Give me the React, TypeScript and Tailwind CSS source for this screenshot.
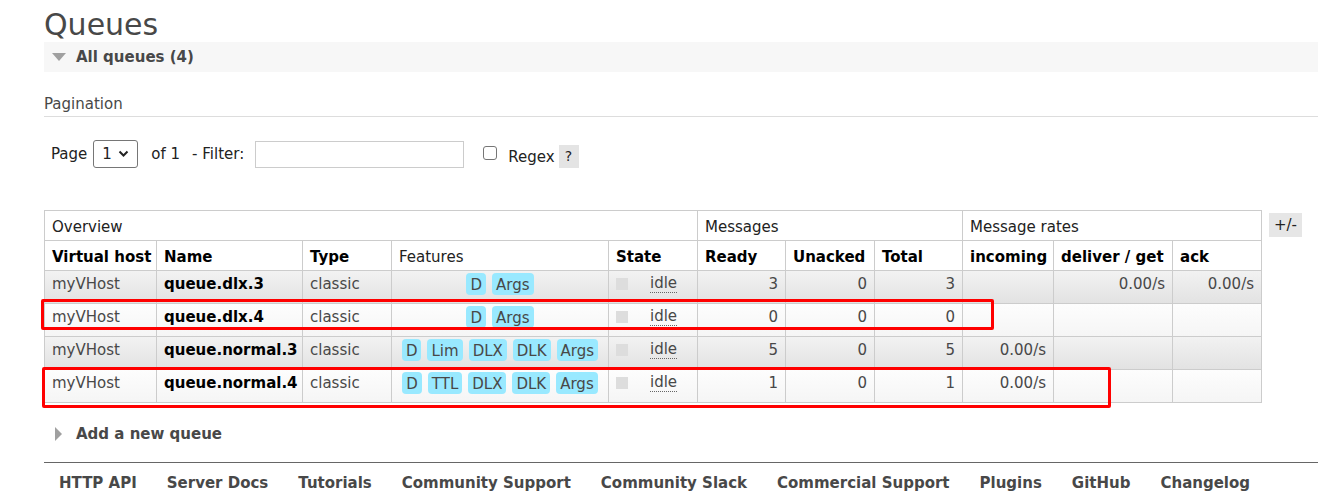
import React from "react";

const F = { fontFamily: '"DejaVu Sans", Verdana, Tahoma, sans-serif' };

type Row = {
  name: string;
  feats: string[];
  ready: string;
  unacked: string;
  total: string;
  incoming: string;
  deliver: string;
  ack: string;
  alt: boolean;
};

const rows: Row[] = [
  { name: "queue.dlx.3", feats: ["D", "Args"], ready: "3", unacked: "0", total: "3", incoming: "", deliver: "0.00/s", ack: "0.00/s", alt: true },
  { name: "queue.dlx.4", feats: ["D", "Args"], ready: "0", unacked: "0", total: "0", incoming: "", deliver: "", ack: "", alt: false },
  { name: "queue.normal.3", feats: ["D", "Lim", "DLX", "DLK", "Args"], ready: "5", unacked: "0", total: "5", incoming: "0.00/s", deliver: "", ack: "", alt: true },
  { name: "queue.normal.4", feats: ["D", "TTL", "DLX", "DLK", "Args"], ready: "1", unacked: "0", total: "1", incoming: "0.00/s", deliver: "", ack: "", alt: false },
];

const colW = [112, 146, 89, 217, 89, 88, 89, 88, 91, 119, 89];

export default function App() {
  const td = "border border-[#cccccc] px-[7px] align-top pt-[2px] text-[15px]";
  const th = "border border-[#cccccc] px-[7px] text-left pt-[3px]";
  return (
    <div style={F} className="w-[1318px] h-[504px] bg-white text-[#484848] overflow-hidden relative">
      <div className="pl-[44px]">
        <h1 className="text-[30px] leading-[34px] pt-[8px] text-[#484848] font-normal">Queues</h1>
        <div className="h-[30px] bg-[#f7f7f7] flex items-center">
          <svg width="14" height="8" viewBox="0 0 14 8" className="ml-[8px] mr-[10px]">
            <polygon points="0,0 14,0 7,8" fill="#a0a0a0" />
          </svg>
          <span className="font-bold text-[15px] text-[#484848]">All queues (4)</span>
        </div>
        <div className="mt-[24px] border-b border-[#dddddd] pb-[3px] text-[15px] leading-[17px] text-[#484848]">Pagination</div>
        <div className="flex items-center mt-[23px] h-[28px] text-[15px] text-[#222]">
          <span className="ml-[7px]">Page</span>
          <div className="ml-[6px] w-[45px] h-[28px] border border-[#767676] rounded-[3px] flex items-center justify-between px-[8px]">
            <span>1</span>
            <svg width="11" height="8" viewBox="0 0 11 8"><polyline points="1.5,1.5 5.5,5.5 9.5,1.5" fill="none" stroke="#222" strokeWidth="2" /></svg>
          </div>
          <span className="ml-[13px]">of 1</span>
          <span className="ml-[12px]">- Filter:</span>
          <div className="ml-[11px] w-[209px] h-[27px] border border-[#cccccc] bg-white" />
          <div className="ml-[19px] w-[14px] h-[14px] border border-[#767676] rounded-[3px] mb-[3px]" />
          <span className="ml-[11px] mt-[6px]">Regex</span>
          <span className="ml-[4px] mt-[4px] w-[20px] h-[23px] bg-[#e4e4e4] flex items-center justify-center text-[14px]">?</span>
        </div>
        <div className="flex mt-[42px] items-start">
          <table className="border-collapse table-fixed" style={{ width: 1217 }}>
            <colgroup>
              {colW.map((w, i) => (
                <col key={i} style={{ width: w }} />
              ))}
            </colgroup>
            <thead>
              <tr className="h-[30px] text-[15px]">
                <th colSpan={5} className={th + " font-normal text-[#222]"}>Overview</th>
                <th colSpan={3} className={th + " font-normal text-[#222]"}>Messages</th>
                <th colSpan={3} className={th + " font-normal text-[#222]"}>Message rates</th>
              </tr>
              <tr className="h-[30px] text-[15px] text-black">
                <th className={th + " font-bold whitespace-nowrap"}>Virtual host</th>
                <th className={th + " font-bold"}>Name</th>
                <th className={th + " font-bold"}>Type</th>
                <th className={th + " font-normal text-[#222]"}>Features</th>
                <th className={th + " font-bold"}>State</th>
                <th className={th + " font-bold"}>Ready</th>
                <th className={th + " font-bold"}>Unacked</th>
                <th className={th + " font-bold"}>Total</th>
                <th className={th + " font-bold"}>incoming</th>
                <th className={th + " font-bold whitespace-nowrap"}>deliver / get</th>
                <th className={th + " font-bold"}>ack</th>
              </tr>
            </thead>
            <tbody>
              {rows.map((r) => (
                <tr
                  key={r.name}
                  className={
                    "h-[33px] " +
                    (r.alt ? "bg-gradient-to-b from-[#f2f2f2] to-[#e2e2e2]" : "bg-gradient-to-b from-[#fdfdfd] to-[#f5f5f5]")
                  }
                >
                  <td className={td}>myVHost</td>
                  <td className={td + " font-bold text-black whitespace-nowrap"}>{r.name}</td>
                  <td className={td}>classic</td>
                  <td className="border border-[#cccccc] px-[4px] align-top pt-[2px]">
                    <div className="flex justify-center gap-[6px]">
                      {r.feats.map((f) => (
                        <span key={f} className="bg-[#99e9ff] rounded-[4px] px-[4px] h-[22px] leading-[25px] text-[15px] text-[#484848] whitespace-nowrap">
                          {f}
                        </span>
                      ))}
                    </div>
                  </td>
                  <td className={td}>
                    <div className="flex items-start">
                      <span className="w-[12px] h-[12px] bg-[#dddddd] mt-[5px]" />
                      <span className="ml-[22px] border-b border-dotted border-[#666] leading-[18px] pt-[1px]">idle</span>
                    </div>
                  </td>
                  <td className={td + " text-right"}>{r.ready}</td>
                  <td className={td + " text-right"}>{r.unacked}</td>
                  <td className={td + " text-right"}>{r.total}</td>
                  <td className={td + " text-right"}>{r.incoming}</td>
                  <td className={td + " text-right"}>{r.deliver}</td>
                  <td className={td + " text-right"}>{r.ack}</td>
                </tr>
              ))}
            </tbody>
          </table>
          <span className="ml-[7px] mt-[3px] w-[33px] h-[24px] bg-[#e6e6e6] flex items-center justify-center text-[15px] text-[#222]">+/-</span>
        </div>
        <div className="flex items-center mt-[22px] h-[18px]">
          <svg width="8" height="14" viewBox="0 0 8 14" className="ml-[11px] mr-[13px]">
            <polygon points="0,0 7,7 0,14" fill="#a0a0a0" />
          </svg>
          <span className="font-bold text-[15px] text-[#484848]">Add a new queue</span>
        </div>
        <div className="mt-[19px] border-t border-[#666666] flex pt-[9px] text-[15px] font-bold text-[#484848]">
          <span className="ml-[15px]">HTTP API</span>
          <span className="ml-[30px]">Server Docs</span>
          <span className="ml-[30px]">Tutorials</span>
          <span className="ml-[30px]">Community Support</span>
          <span className="ml-[30px]">Community Slack</span>
          <span className="ml-[30px]">Commercial Support</span>
          <span className="ml-[30px]">Plugins</span>
          <span className="ml-[30px]">GitHub</span>
          <span className="ml-[30px]">Changelog</span>
        </div>
      </div>
      <div className="absolute left-[41px] top-[299px] w-[953px] h-[31px] border-[3px] border-[#ff0000] rounded-[2px]" />
      <div className="absolute left-[42px] top-[367px] w-[1069px] h-[41px] border-[3px] border-[#ff0000] rounded-[2px]" />
    </div>
  );
}
